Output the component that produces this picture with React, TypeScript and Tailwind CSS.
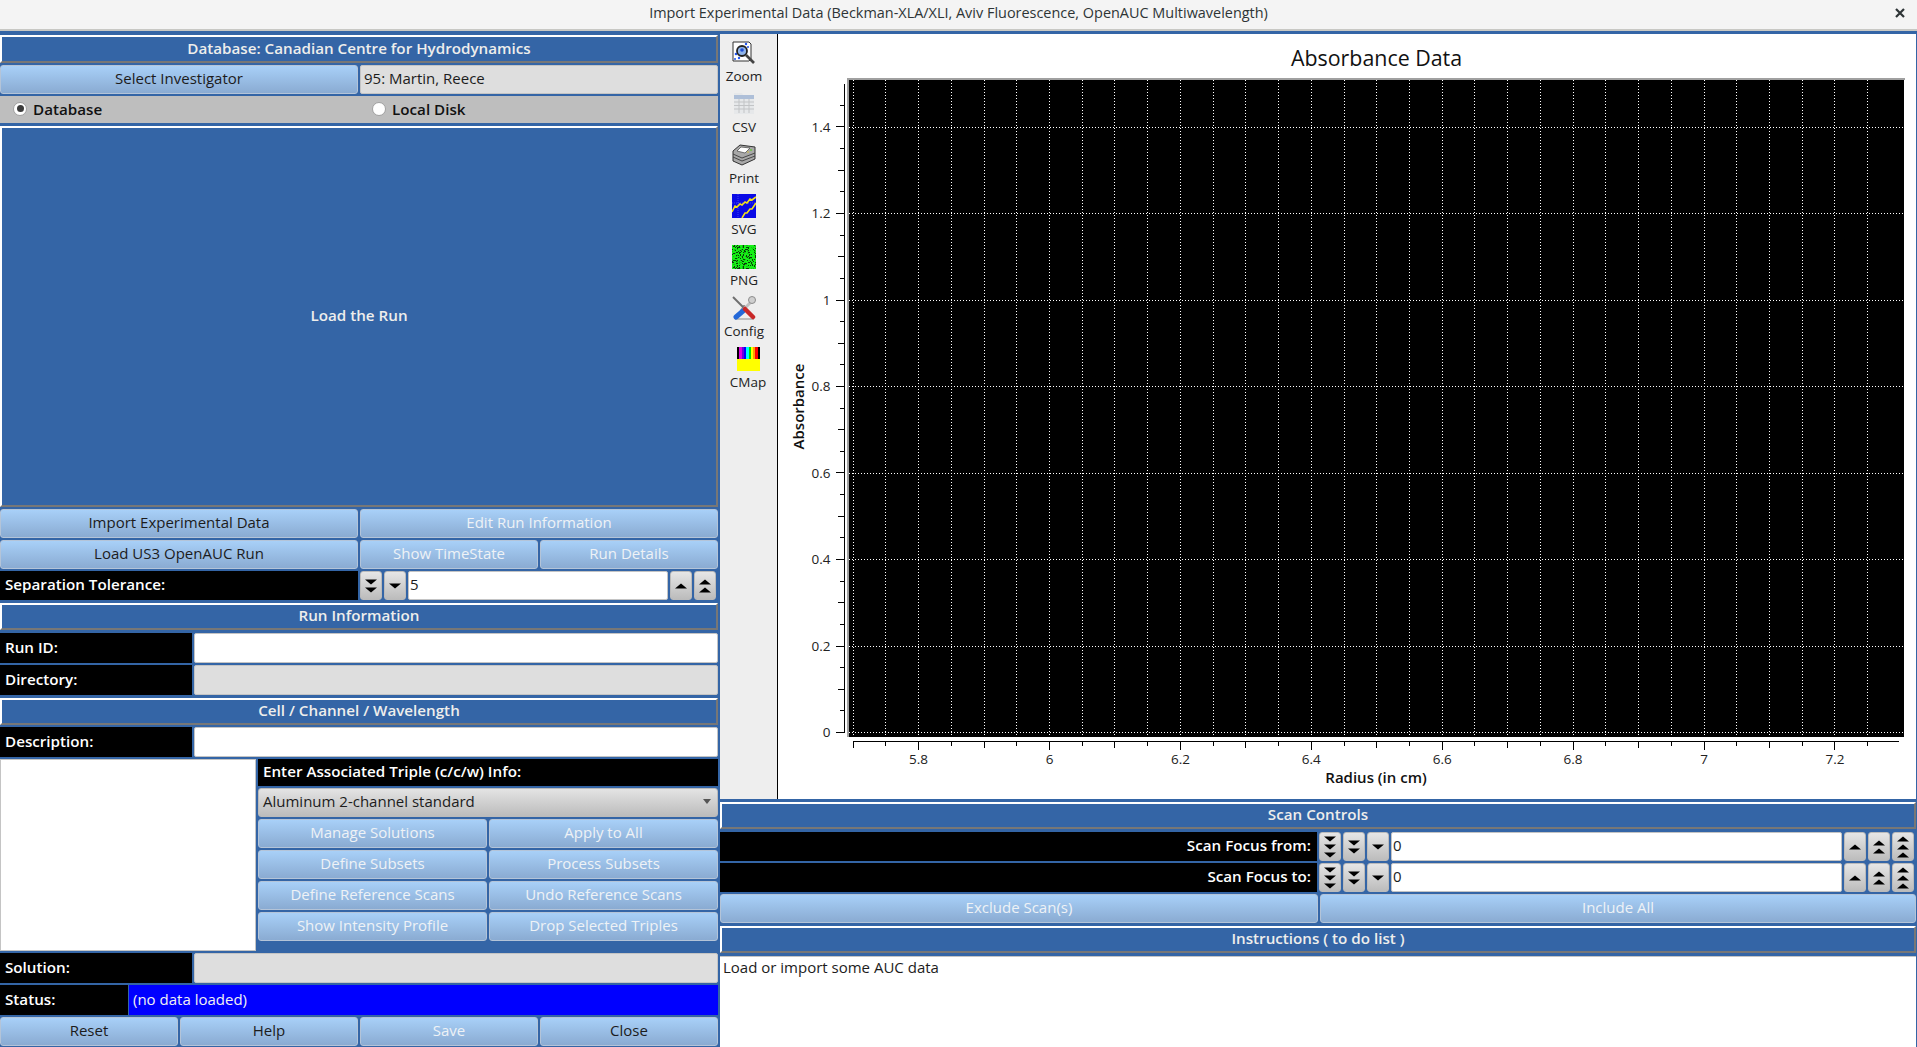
import React from 'react';

const font = '[font-family:"Open_Sans",sans-serif]';

function Banner({ children, className = '' }: { children: React.ReactNode; className?: string }) {
  return (
    <div className={`shrink-0 flex items-center justify-center bg-[#3465a6] border-t-2 border-l-2 border-white border-b-2 border-r-2 border-b-[#777777] border-r-[#777777] text-[15.2px] font-semibold text-[#eeeeec] ${className}`}>
      {children}
    </div>
  );
}

function Btn({ children, off, className = '' }: { children: React.ReactNode; off?: boolean; className?: string }) {
  return (
    <button className={`h-full rounded-[3px] border border-[#b4c4d8] bg-gradient-to-b from-[#a8d0f8] to-[#8aabd2] pb-[2px] text-[15px] ${off ? 'text-[#eef2f6]' : 'text-[#1c1c1c]'} ${className}`}>
      {children}
    </button>
  );
}

function Label({ children, className = '' }: { children: React.ReactNode; className?: string }) {
  return (
    <div className={`h-full flex items-center bg-black pl-[5px] pr-[6px] pb-[2px] text-[15.2px] font-semibold text-white ${className}`}>
      {children}
    </div>
  );
}

function Field({ children, gray, className = '' }: { children?: React.ReactNode; gray?: boolean; className?: string }) {
  return (
    <div className={`h-full flex items-center rounded-[2px] border border-[#c4c4c4] px-[3px] pb-[2px] text-[15px] text-[#1c1c1c] ${gray ? 'bg-[#dedede]' : 'bg-white'} ${className}`}>
      {children}
    </div>
  );
}

// qwt counter buttons: count = number of triangles
function Spin({ count, dir }: { count: 1 | 2 | 3; dir: 'up' | 'down' }) {
  const h = 5;
  const total = count * h + (count - 1) * 3;
  const start = 14 - total / 2;
  return (
    <button className="h-full w-[22px] shrink-0 rounded-[3px] border border-[#bbbbbb] bg-gradient-to-b from-[#e6e6e6] to-[#bcbcbc] flex items-center justify-center">
      <svg width="14" height="28" viewBox="0 0 14 28">
        {Array.from({ length: count }).map((_, i) => {
          const y = start + i * (h + 3);
          const pts = dir === 'up' ? `7,${y} 13,${y + h} 1,${y + h}` : `1,${y} 13,${y} 7,${y + h}`;
          return <polygon key={i} points={pts} fill="#000000" />;
        })}
      </svg>
    </button>
  );
}

function ZoomIcon() {
  return (
    <svg width="24" height="24" viewBox="0 0 24 24">
      <path d="M1 1h16l2 2v15l-2 2H1z" fill="#ffffff" stroke="#333333" strokeWidth="1" />
      <g fill="#2255ee">
        <circle cx="4" cy="13" r="1.3" /><circle cx="7" cy="17" r="1.2" /><circle cx="14" cy="3" r="1.2" /><circle cx="16" cy="6" r="1" /><circle cx="3" cy="18" r="1" />
      </g>
      <circle cx="10" cy="10" r="5" fill="#8fb4ea" stroke="#222222" strokeWidth="1.8" />
      <circle cx="10" cy="9" r="1.8" fill="#1f4fd8" />
      <path d="M14 14l8 8" stroke="#444444" strokeWidth="2.6" />
    </svg>
  );
}

function CsvIcon() {
  return (
    <svg width="24" height="24" viewBox="0 0 24 24">
      <path d="M2 1h8l1 2h11v19H2z" fill="#e6e8ea" />
      <rect x="2" y="3" width="20" height="4" fill="#aebfd8" />
      <path d="M2 10h20M2 13.500h20M2 17h20M7 7v14M12 7v14M17 7v14" stroke="#c2c4c6" strokeWidth="1" fill="none" />
    </svg>
  );
}

function PrintIcon() {
  return (
    <svg width="24" height="24" viewBox="0 0 24 24">
      <path d="M1 8l7-6 15 2v12l-13 6-9-4z" fill="#a8a8a8" stroke="#333333" strokeWidth="1" />
      <path d="M5 8l4-4 9 1-5 5z" fill="#ffffff" stroke="#444444" strokeWidth="0.7" />
      <path d="M1 11l9 4 13-5M1 14l9 4 13-5" stroke="#3c3c3c" strokeWidth="0.9" fill="none" />
      <circle cx="19" cy="7" r="1.1" fill="#6fbf4a" />
      <circle cx="16" cy="9" r="0.8" fill="#d9c23a" />
    </svg>
  );
}

function SvgIcon() {
  return (
    <svg width="24" height="24" viewBox="0 0 24 24">
      <rect width="24" height="24" fill="#0a0ae6" />
      <path d="M6 0v24M0 9h24" stroke="#7f7ff2" strokeWidth="0.5" strokeDasharray="1 1" />
      <path d="M0 18l3-6 2 1 3-3 2 1 3-3 2 1 3-4 2 1 4-3" stroke="#f2e21a" strokeWidth="1.6" fill="none" />
      <path d="M10 24l3-5 2 0 3-4 2 0 4-6" stroke="#f2e21a" strokeWidth="1.6" fill="none" />
    </svg>
  );
}

function PngIcon() {
  // fixed speckle pattern
  const cells: React.ReactElement[] = [];
  let seed = 7;
  for (let y = 0; y < 24; y++) {
    for (let x = 0; x < 24; x++) {
      seed = (seed * 137 + 59) % 1009;
      if (seed % 4 === 0) cells.push(<rect key={`${x}-${y}`} x={x} y={y} width="1" height="1" fill="#0a3a0a" />);
      else if (seed % 5 === 0) cells.push(<rect key={`${x}-${y}`} x={x} y={y} width="1" height="1" fill="#11c411" />);
    }
  }
  return (
    <svg width="24" height="24" viewBox="0 0 24 24" shapeRendering="crispEdges">
      <rect width="24" height="24" fill="#16f016" />
      {cells}
    </svg>
  );
}

function ConfigIcon() {
  return (
    <svg width="24" height="24" viewBox="0 0 24 24">
      <path d="M3 23h19L12 9z" fill="none" stroke="#8a8a8a" strokeWidth="1" />
      <path d="M1 1l12 12" stroke="#6f6f6f" strokeWidth="2" />
      <path d="M20 5L9 16" stroke="#c0c0c0" strokeWidth="3" />
      <path d="M11 15l-7 6" stroke="#2468d8" strokeWidth="5" strokeLinecap="round" />
      <path d="M13 13l8 8" stroke="#c82828" strokeWidth="4.500" strokeLinecap="round" />
      <circle cx="20" cy="4" r="3.500" fill="#cfcfcf" stroke="#8c8c8c" />
    </svg>
  );
}

function CmapIcon() {
  const bands = ['#000000', '#e000e0', '#6a00e0', '#0000ff', '#00ffff', '#00e000', '#ffff00', '#ffa000', '#ff0000', '#000000'];
  return (
    <svg width="23" height="24" viewBox="0 0 23 24" shapeRendering="crispEdges">
      {bands.map((c, i) => (
        <rect key={i} x={i * 2.3} y="0" width="2.3" height="12" fill={c} />
      ))}
      <rect y="12" width="23" height="12" fill="#ffff00" />
    </svg>
  );
}

function Tool({ label, icon, shift }: { label: string; icon: React.ReactNode; shift?: boolean }) {
  return (
    <div className={`h-[51px] flex flex-col items-center ${shift ? 'w-[52px] pl-[4px]' : 'w-[48px]'}`}>
      <div className="h-[24px]">{icon}</div>
      <div className="mt-[2px] text-[13.5px] leading-[18px] text-[#222222]">{label}</div>
    </div>
  );
}

function Chart() {
  const xOf = (v: number) => 1049 + (v - 6) * 654.5;
  const yOf = (v: number) => 732 - v * 432.5;
  const xSteps = Array.from({ length: 32 }, (_, i) => 5.7 + i * 0.05);
  const ySteps = Array.from({ length: 30 }, (_, i) => i * 0.05);
  const xMajor = [5.8, 6, 6.2, 6.4, 6.6, 6.8, 7, 7.2];
  const yMajor = [0, 0.2, 0.4, 0.6, 0.8, 1, 1.2, 1.4];
  return (
    <svg className="block" width="1138" height="765" viewBox="778 34 1138 765" fontFamily='"Open Sans", sans-serif'>
      <text x="1376.500" y="66" textAnchor="middle" fontSize="21.400" fontWeight="500" fill="#111111">Absorbance Data</text>

      <rect x="847" y="78" width="1058" height="2" fill="#a0a0a0" />
      <rect x="847" y="78" width="2" height="659" fill="#a0a0a0" />
      <rect x="849" y="80" width="1055" height="657" fill="#000000" />

      {xSteps.map((v, i) => (
        <line key={i} x1={Math.round(xOf(v)) + 0.5} x2={Math.round(xOf(v)) + 0.5} y1="80" y2="735" stroke="#ffffff" strokeDasharray="1 2" />
      ))}
      {yMajor.map((v) => (
        <line key={v} x1="849" x2="1904" y1={Math.round(yOf(v)) + 0.5} y2={Math.round(yOf(v)) + 0.5} stroke="#ffffff" strokeDasharray="1 2" />
      ))}

      {/* left axis */}
      <line x1="844.500" x2="844.500" y1="84" y2="733" stroke="#000000" />
      {ySteps.map((v, i) => {
        const len = i % 4 === 0 ? 8 : i % 2 === 0 ? 6 : 4;
        return <line key={i} x1={844 - len} x2="844" y1={Math.round(yOf(v)) + 0.5} y2={Math.round(yOf(v)) + 0.5} stroke="#000000" />;
      })}
      {yMajor.map((v) => (
        <text key={v} x="830.500" y={yOf(v) + 5} textAnchor="end" fontSize="13.500" fill="#222222">{v}</text>
      ))}

      {/* bottom axis */}
      <line x1="853" x2="1899" y1="741.500" y2="741.500" stroke="#000000" />
      {xSteps.map((v, i) => {
        const len = (i + 2) % 4 === 0 ? 8 : i % 2 === 0 ? 6 : 4;
        return <line key={i} x1={Math.round(xOf(v)) + 0.5} x2={Math.round(xOf(v)) + 0.5} y1="742" y2={742 + len} stroke="#000000" />;
      })}
      {xMajor.map((v) => (
        <text key={v} x={xOf(v) + 0.5} y="764" textAnchor="middle" fontSize="13.500" fill="#222222">{v}</text>
      ))}

      <text x="1376" y="783" textAnchor="middle" fontSize="15" fontWeight="600" fill="#111111">Radius (in cm)</text>
      <text transform="translate(804 406.500) rotate(-90)" textAnchor="middle" fontSize="15" fontWeight="600" fill="#111111">Absorbance</text>
    </svg>
  );
}

export default function App() {
  return (
    <div className={`h-screen w-screen overflow-hidden flex flex-col bg-[#3465a6] ${font}`}>
      {/* Window title */}
      <div className="relative h-[31px] shrink-0 flex items-center justify-center bg-[#f4f4f4] border-b-2 border-[#c8c8c4] pb-[3px] text-[14.45px] text-[#2e3436]">
        Import Experimental Data (Beckman-XLA/XLI, Aviv Fluorescence, OpenAUC Multiwavelength)
        <svg className="absolute right-[12px] top-[8px]" width="10" height="10" viewBox="0 0 10 10">
          <path d="M1 1l8 8M9 1l-8 8" stroke="#2e3436" strokeWidth="2.200" />
        </svg>
      </div>

      <div className="flex-1 min-h-0 pt-[3px] flex">
        {/* Left column */}
        <div className="w-[718px] shrink-0 flex flex-col gap-[2px]">
          <Banner className="mt-px h-[28px] pb-[1px]">Database: Canadian Centre for Hydrodynamics</Banner>
          <div className="h-[29px] shrink-0 flex gap-[2px]">
            <Btn className="w-[358px]">Select Investigator</Btn>
            <Field gray className="flex-1">95: Martin, Reece</Field>
          </div>
          <div className="h-[27px] shrink-0 flex items-center bg-[#bebebe] pb-[1px] text-[15.2px] font-semibold text-[#111111]">
            <div className="w-[372px] flex items-center pl-[13px] gap-[6px]">
              <span className="w-[14px] h-[14px] rounded-full bg-white border border-[#a0a0a0] flex items-center justify-center">
                <span className="w-[7px] h-[7px] rounded-full bg-[#3c3c3c]" />
              </span>
              Database
            </div>
            <div className="flex items-center gap-[6px]">
              <span className="w-[14px] h-[14px] rounded-full bg-white border border-[#a0a0a0]" />
              Local Disk
            </div>
          </div>
          <div className="mt-px h-[381px] shrink-0 flex items-center justify-center bg-[#3465a6] border-2 border-white border-b-[#777777] border-r-[#777777] pb-[2px] text-[15.2px] font-semibold text-[#eeeeec]">
            Load the Run
          </div>
          <div className="h-[29px] shrink-0 flex gap-[2px]">
            <Btn className="w-[358px]">Import Experimental Data</Btn>
            <Btn off className="flex-1">Edit Run Information</Btn>
          </div>
          <div className="h-[29px] shrink-0 flex gap-[2px]">
            <Btn className="w-[358px]">Load US3 OpenAUC Run</Btn>
            <Btn off className="w-[178px]">Show TimeState</Btn>
            <Btn off className="flex-1">Run Details</Btn>
          </div>
          <div className="h-[29px] shrink-0 flex gap-[2px] pr-[2px]">
            <Label className="w-[358px]">Separation Tolerance:</Label>
            <Spin count={2} dir="down" />
            <Spin count={1} dir="down" />
            <Field className="flex-1 !pl-[1px]">5</Field>
            <Spin count={1} dir="up" />
            <Spin count={2} dir="up" />
          </div>
          <Banner className="mt-px mb-px h-[27px] pb-[2px]">Run Information</Banner>
          <div className="h-[30px] shrink-0 flex gap-[2px]">
            <Label className="w-[192px]">Run ID:</Label>
            <Field className="flex-1" />
          </div>
          <div className="h-[30px] shrink-0 flex gap-[2px]">
            <Label className="w-[192px]">Directory:</Label>
            <Field gray className="flex-1" />
          </div>
          <Banner className="mt-px h-[27px] pb-[2px]">Cell / Channel / Wavelength</Banner>
          <div className="h-[30px] shrink-0 flex gap-[2px]">
            <Label className="w-[192px]">Description:</Label>
            <Field className="flex-1" />
          </div>
          <div className="h-[192px] shrink-0 flex gap-[2px]">
            <div className="w-[256px] h-full bg-white border border-[#c4c4c4]" />
            <div className="flex-1 flex flex-col gap-[2px]">
              <Label className="!h-[27px] shrink-0">Enter Associated Triple (c/c/w) Info:</Label>
              <div className="h-[29px] shrink-0 flex items-center justify-between rounded-[3px] border border-[#bbbbbb] bg-gradient-to-b from-[#e4e4e4] to-[#bcbcbc] pl-[4px] pr-[4px] pb-[2px] text-[15px] text-[#1c1c1c]">
                Aluminum 2-channel standard
                <svg width="8" height="5" viewBox="0 0 8 5" className="mr-[2px]"><polygon points="0,0 8,0 4,5" fill="#555555" /></svg>
              </div>
              <div className="grid grid-cols-2 grid-rows-4 gap-[2px] h-[122px] shrink-0">
                <Btn off>Manage Solutions</Btn>
                <Btn off>Apply to All</Btn>
                <Btn off>Define Subsets</Btn>
                <Btn off>Process Subsets</Btn>
                <Btn off>Define Reference Scans</Btn>
                <Btn off>Undo Reference Scans</Btn>
                <Btn off>Show Intensity Profile</Btn>
                <Btn off>Drop Selected Triples</Btn>
              </div>
            </div>
          </div>
          <div className="h-[30px] shrink-0 flex gap-[2px]">
            <Label className="w-[192px]">Solution:</Label>
            <Field gray className="flex-1" />
          </div>
          <div className="h-[30px] shrink-0 flex gap-[1px]">
            <Label className="w-[128px]">Status:</Label>
            <div className="flex-1 h-full flex items-center bg-[#0000ff] px-[4px] pb-[2px] text-[15px] text-[#f2f2f2]">(no data loaded)</div>
          </div>
          <div className="h-[29px] shrink-0 grid grid-cols-4 gap-[2px]">
            <Btn>Reset</Btn>
            <Btn>Help</Btn>
            <Btn off>Save</Btn>
            <Btn>Close</Btn>
          </div>
        </div>

        {/* Right column */}
        <div className="ml-[2px] mr-px flex-1 min-w-0 flex flex-col gap-[2px]">
          <div className="h-[765px] shrink-0 flex">
            <div className="w-[58px] shrink-0 bg-[#eeeeee] border-r border-black pt-[7px]">
              <div className="flex flex-col">
                <Tool label="Zoom" icon={<ZoomIcon />} />
                <Tool label="CSV" icon={<CsvIcon />} />
                <Tool label="Print" icon={<PrintIcon />} />
                <Tool label="SVG" icon={<SvgIcon />} />
                <Tool label="PNG" icon={<PngIcon />} />
                <Tool label="Config" icon={<ConfigIcon />} />
                <Tool label="CMap" icon={<CmapIcon />} shift />
              </div>
            </div>
            <div className="flex-1 bg-white">
              <Chart />
            </div>
          </div>
          <Banner className="mt-px mb-px h-[27px] pb-[2px]">Scan Controls</Banner>
          <div className="h-[29px] shrink-0 flex gap-[2px] pr-[2px]">
            <Label className="w-[597px] justify-end">Scan Focus from:</Label>
            <Spin count={3} dir="down" />
            <Spin count={2} dir="down" />
            <Spin count={1} dir="down" />
            <Field className="flex-1 !pl-[1px]">0</Field>
            <Spin count={1} dir="up" />
            <Spin count={2} dir="up" />
            <Spin count={3} dir="up" />
          </div>
          <div className="h-[29px] shrink-0 flex gap-[2px] pr-[2px]">
            <Label className="w-[597px] justify-end">Scan Focus to:</Label>
            <Spin count={3} dir="down" />
            <Spin count={2} dir="down" />
            <Spin count={1} dir="down" />
            <Field className="flex-1 !pl-[1px]">0</Field>
            <Spin count={1} dir="up" />
            <Spin count={2} dir="up" />
            <Spin count={3} dir="up" />
          </div>
          <div className="h-[29px] shrink-0 flex gap-[2px]">
            <Btn off className="w-[598px]">Exclude Scan(s)</Btn>
            <Btn off className="flex-1">Include All</Btn>
          </div>
          <Banner className="mt-px mb-px h-[27px] pb-[2px]">Instructions ( to do list )</Banner>
          <div className="flex-1 min-h-0 bg-white border-t border-[#c4c4c4] px-[3px] text-[15px] leading-[20px] text-[#1c1c1c]">
            Load or import some AUC data
          </div>
        </div>
      </div>
    </div>
  );
}
